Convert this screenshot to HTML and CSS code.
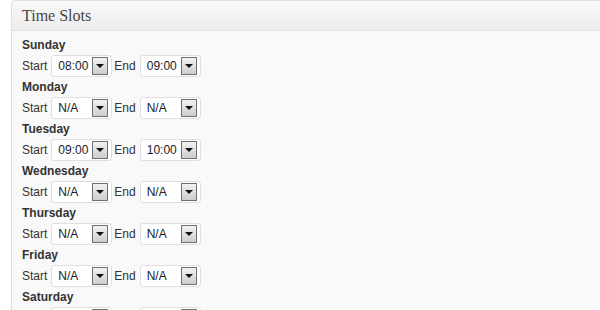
FILE: index.html
```html
<!DOCTYPE html>
<html lang="en">
<head>
    <meta charset="UTF-8">
    <title>Time Slots</title>
    <link rel="stylesheet" href="styles.css">
</head>
<body>
    <div class="postbox">
        <h3 class="hndle">Time Slots</h3>
        <div class="inside">
            <div class="day">
                <div class="day-name">Sunday</div>
                <div class="slot-row">
                    <span class="lbl">Start</span>
                    <span class="fake-select"><span class="val">08:00</span><span class="drop"></span></span>
                    <span class="lbl">End</span>
                    <span class="fake-select"><span class="val">09:00</span><span class="drop"></span></span>
                </div>
            </div>
            <div class="day">
                <div class="day-name">Monday</div>
                <div class="slot-row">
                    <span class="lbl">Start</span>
                    <span class="fake-select"><span class="val">N/A</span><span class="drop"></span></span>
                    <span class="lbl">End</span>
                    <span class="fake-select"><span class="val">N/A</span><span class="drop"></span></span>
                </div>
            </div>
            <div class="day">
                <div class="day-name">Tuesday</div>
                <div class="slot-row">
                    <span class="lbl">Start</span>
                    <span class="fake-select"><span class="val">09:00</span><span class="drop"></span></span>
                    <span class="lbl">End</span>
                    <span class="fake-select"><span class="val">10:00</span><span class="drop"></span></span>
                </div>
            </div>
            <div class="day">
                <div class="day-name">Wednesday</div>
                <div class="slot-row">
                    <span class="lbl">Start</span>
                    <span class="fake-select"><span class="val">N/A</span><span class="drop"></span></span>
                    <span class="lbl">End</span>
                    <span class="fake-select"><span class="val">N/A</span><span class="drop"></span></span>
                </div>
            </div>
            <div class="day">
                <div class="day-name">Thursday</div>
                <div class="slot-row">
                    <span class="lbl">Start</span>
                    <span class="fake-select"><span class="val">N/A</span><span class="drop"></span></span>
                    <span class="lbl">End</span>
                    <span class="fake-select"><span class="val">N/A</span><span class="drop"></span></span>
                </div>
            </div>
            <div class="day">
                <div class="day-name">Friday</div>
                <div class="slot-row">
                    <span class="lbl">Start</span>
                    <span class="fake-select"><span class="val">N/A</span><span class="drop"></span></span>
                    <span class="lbl">End</span>
                    <span class="fake-select"><span class="val">N/A</span><span class="drop"></span></span>
                </div>
            </div>
            <div class="day">
                <div class="day-name">Saturday</div>
                <div class="slot-row">
                    <span class="lbl">Start</span>
                    <span class="fake-select"><span class="val">N/A</span><span class="drop"></span></span>
                    <span class="lbl">End</span>
                    <span class="fake-select"><span class="val">N/A</span><span class="drop"></span></span>
                </div>
            </div>
        </div>
    </div>
</body>
</html>
```

FILE: styles.css
```css
* {
    margin: 0;
    padding: 0;
    box-sizing: border-box;
}

body {
    font-family: "Liberation Sans", Arial, sans-serif;
    font-size: 12px;
    color: #333;
    background: #fff;
    overflow: hidden;
}

.postbox {
    margin-left: 11px;
    border-left: 1px solid #dfdfdf;
    border-top: 1px solid #dfdfdf;
    border-top-left-radius: 4px;
    background: #f9f9f9;
    min-height: 400px;
}

.hndle {
    height: 30px;
    padding: 0 10px;
    font-family: "Liberation Serif", Georgia, serif;
    font-size: 16px;
    font-weight: normal;
    line-height: 30px;
    color: #464646;
    background: linear-gradient(to bottom, #f9f9f9, #ececec);
    border-bottom: 1px solid #dfdfdf;
    border-top-left-radius: 3px;
}

.inside {
    padding: 4px 10px 0;
}

.day-name {
    font-weight: bold;
    line-height: 20px;
    color: #333;
}

.slot-row {
    display: flex;
    align-items: center;
    height: 22px;
}

.lbl {
    margin-right: 4px;
}

.fake-select {
    display: flex;
    align-items: center;
    justify-content: space-between;
    width: 61px;
    height: 22px;
    margin-right: 2px;
    padding: 0 3px 0 6px;
    background: #fff;
    border: 1px solid #dfdfdf;
    border-radius: 3px;
    color: #1a1a2a;
}

.drop {
    position: relative;
    width: 16px;
    height: 18px;
    border: 1px solid #6f6f6f;
    background: linear-gradient(to bottom, #f2f2f2, #cdcdcd);
}

.drop:after {
    content: "";
    position: absolute;
    left: 3px;
    top: 6px;
    border-left: 4px solid transparent;
    border-right: 4px solid transparent;
    border-top: 4px solid #111;
}
```
